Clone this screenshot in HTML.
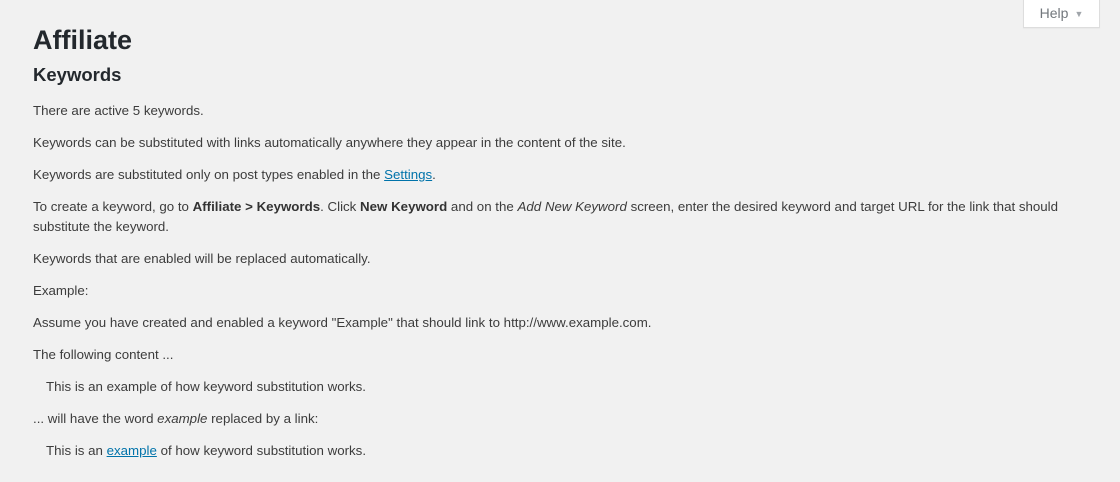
<!DOCTYPE html>
<html><head><meta charset="utf-8"><style>
body{margin:0;background:#f1f1f1;width:1120px;height:482px;overflow:hidden;font-family:"Liberation Sans",sans-serif;color:#3c3c3c;font-size:13.3px;position:relative}
.help{position:absolute;left:1023px;top:-1px;width:75px;height:28px;background:#fff;border:1px solid #ddd;border-top:none;box-shadow:0 1px 1px rgba(0,0,0,.04);color:#72777c;font-size:14px;line-height:29px;text-align:center}
.help span{font-size:9px;color:#a0a5aa;margin-left:6px;vertical-align:1px}
h1{position:absolute;left:33px;top:22px;margin:0;font-size:27px;font-weight:bold;color:#23282d;line-height:36px}
h3{position:absolute;left:33px;top:62px;margin:0;font-size:18.5px;font-weight:bold;color:#23282d;line-height:26px}
.c{position:absolute;left:33px;top:101px;width:1060px}
p{margin:0 0 12px;line-height:20px;white-space:nowrap}
a{color:#0073aa;text-decoration:underline}
.i{padding-left:13px}
b{color:#333}
</style></head><body>
<div class="help">Help<span>▼</span></div>
<h1>Affiliate</h1>
<h3>Keywords</h3>
<div class="c">
<p>There are active 5 keywords.</p>
<p>Keywords can be substituted with links automatically anywhere they appear in the content of the site.</p>
<p>Keywords are substituted only on post types enabled in the <a>Settings</a>.</p>
<p>To create a keyword, go to <b>Affiliate &gt; Keywords</b>. Click <b>New Keyword</b> and on the <i>Add New Keyword</i> screen, enter the desired keyword and target URL for the link that should<br>substitute the keyword.</p>
<p>Keywords that are enabled will be replaced automatically.</p>
<p>Example:</p>
<p>Assume you have created and enabled a keyword "Example" that should link to http://www.example.com.</p>
<p>The following content ...</p>
<p class="i">This is an example of how keyword substitution works.</p>
<p>... will have the word <i>example</i> replaced by a link:</p>
<p class="i">This is an <a>example</a> of how keyword substitution works.</p>
</div>
</body></html>
